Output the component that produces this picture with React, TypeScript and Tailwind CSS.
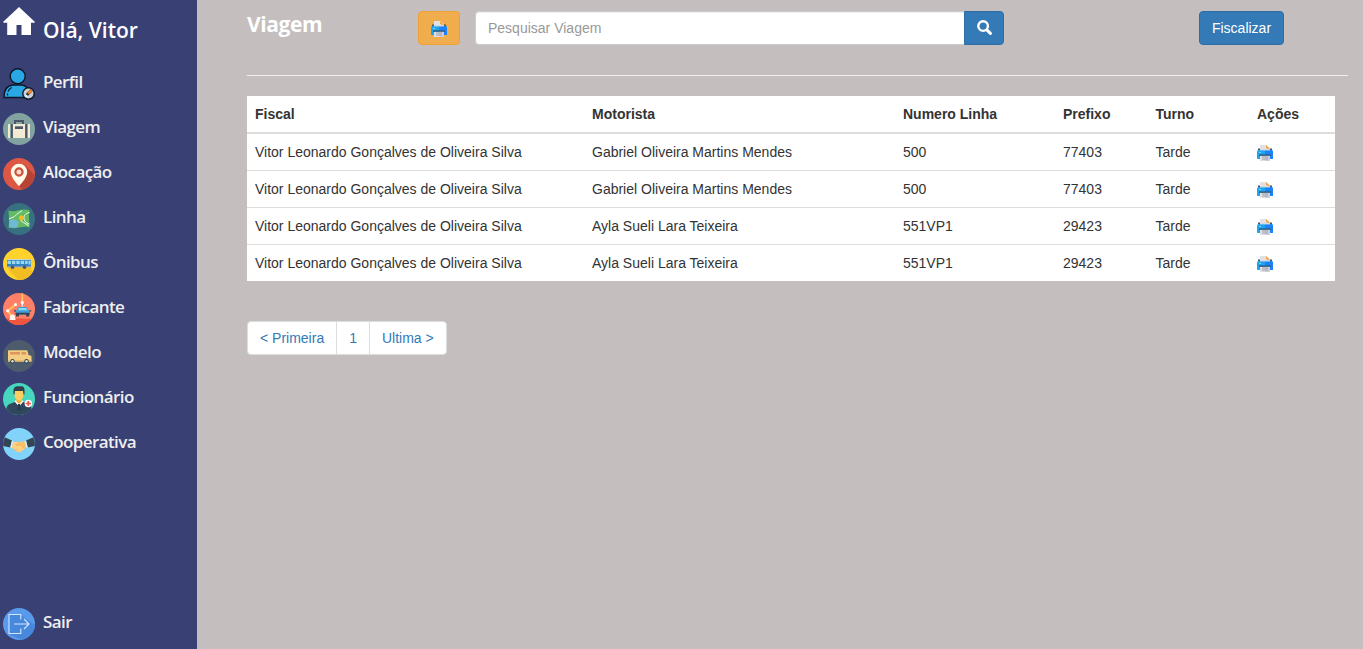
import type { ReactNode } from 'react';

function PrinterIcon() {
  return (
    <svg viewBox="0 0 16 16" className="block size-4">
      <path d="M1 3.500h2.500V7H1zM12.500 3.500H15V7h-2.500z" fill="#4a5565" />
      <path d="M3 0h6.500L13 3.500V7H3z" fill="#e0e1e5" />
      <path d="M9 0l4 4h-2.500L9 2.500z" fill="#f9a13c" />
      <path d="M1 5h14l1 1.500V13c0 .6-.4 1-1 1H1c-.6 0-1-.4-1-1V6.500z" fill="#1fa4f2" />
      <path d="M8 5h7l1 1.500V13c0 .6-.4 1-1 1H8z" fill="#1a83fb" />
      <path d="M3 4.800h10v.8H3z" fill="#9fc4e2" />
      <path d="M2 9.400h12v1.500H2z" fill="#2d5878" />
      <path d="M3 10.900h10V16H3z" fill="#dfdfe6" />
      <path d="M8 10.900h5V16H8z" fill="#cfcfd9" />
      <path d="M5 11.500h6v1H5zM5 13.600h6v.9H5z" fill="#a0a0a9" />
      <path d="M2 7h2v1H2z" fill="#7bd5ff" />
    </svg>
  );
}

function Icon({ children }: { children: ReactNode }) {
  return (
    <svg viewBox="0 0 32 32" className="block size-8 shrink-0">
      {children}
    </svg>
  );
}

const disc = (fill: string) => <circle cx="16" cy="16" r="16" fill={fill} />;

const homeIcon = (
  <Icon>
    <path d="M16 2L0 17l.8.8H4.200V30h9.300V20h5v10H28V17.800h3.200L32 17z" fill="#fff" />
  </Icon>
);

const items: { label: string; low?: boolean; icon: ReactNode }[] = [
  {
    label: 'Perfil',
    icon: (
      <Icon>
        <path d="M1 29.500C1 22 4.500 17.500 10 17h9c4 .8 6.500 3.200 7 7v5.500z" fill="#29a8e5" stroke="#0d1726" strokeWidth="1.400" />
        <circle cx="14.700" cy="8.300" r="7.500" fill="#29a8e5" stroke="#0d1726" strokeWidth="1.400" />
        <path d="M4.500 27.500v-2M5 23.500c.8-1.900 2-3.100 3.700-4" stroke="#0d1726" strokeWidth="1.200" fill="none" />
        <circle cx="25.500" cy="25.500" r="5.700" fill="#c9d0d5" stroke="#0d1726" strokeWidth="1.400" />
        <path d="M22.500 28.500l1-3.400 4.200-4 2 1.900-4.300 4.500z" fill="#333" />
        <path d="M24.300 24.500l3.500-3.300 1.700 1.700-3.500 3.300z" fill="#f58a20" />
        <path d="M21.800 29.200l1-3 2.200 2z" fill="#fff" />
      </Icon>
    ),
  },
  {
    label: 'Viagem',
    icon: (
      <Icon>
        {disc('#83a3a0')}
        <path d="M12 11V8h8v3" fill="none" stroke="#4d5468" strokeWidth="2" />
        <path d="M9.800 11h12.400v14H9.800z" fill="#f2ebd3" />
        <path d="M5 12c0-.6.4-1 1-1h1v14H6c-.6 0-1-.4-1-1zM25 11h1c.6 0 1 .4 1 1v12c0 .6-.4 1-1 1h-1z" fill="#f2ebd3" />
        <path d="M8 11h1.800v14H8zM22.200 11H24v14h-1.800z" fill="#4d5468" />
        <path d="M12 13.300h8v2.700h-8z" fill="#4d5468" />
      </Icon>
    ),
  },
  {
    label: 'Alocação',
    icon: (
      <Icon>
        {disc('#dc5744')}
        <path d="M22.500 8L32 17.200A16 16 0 0 1 19.500 31.600L16 28z" fill="#b74435" />
        <path d="M16 5.800a8.200 8.200 0 0 0-8.200 8.200C7.800 20 16 28.200 16 28.200S24.200 20 24.200 14A8.200 8.200 0 0 0 16 5.800z" fill="#fffbe7" />
        <circle cx="16" cy="14" r="3.600" fill="#f6dccb" stroke="#cf4f3f" strokeWidth="2.200" />
      </Icon>
    ),
  },
  {
    label: 'Linha',
    icon: (
      <Icon>
        {disc('#37707e')}
        <path d="M5.500 7.500c3 1 6 .8 10-.2s8-1 11 0l-.6 5 .6 12.200c-3-1-7-.9-10.500.1s-7.500.9-10.500-.1l.6-5z" fill="#62bb62" />
        <path d="M6.300 17.500c4-2 8.700-1.300 9.200 2 .2 2-1 3.500-1.500 5-3 .3-5.500.3-8-.5z" fill="#6fb9d5" />
        <path d="M6 15.800c7-2 6-4 13-8M17 17c2 2 4.500 3 8.800 5.700M26.500 9.500c-5 1-7 4.500-4.500 8.500 1 1.500 2.500 2.500 4.500 3" fill="none" stroke="#ecfaf1" strokeWidth="1" />
        <path d="M16 14.500c0-3 4.600-3 4.600 0 0 2-2.300 3.800-2.300 3.800S16 16.500 16 14.500z" fill="#f4bb28" />
      </Icon>
    ),
  },
  {
    label: 'Ônibus',
    icon: (
      <Icon>
        {disc('#ffd32c')}
        <path d="M4 19.500h24l1.200 5.500A16 16 0 0 1 15 32z" fill="#f2bd23" />
        <path d="M4 11.500h22.500c.8 0 1.400.5 1.400 1.300V19H4z" fill="#3385c4" />
        <path d="M4 11h22.500c.6 0 1 .3 1 .8H4z" fill="#d7e5ed" />
        <path d="M4.500 12.800h3.400v3.200H4.500zM8.900 12.800h3.400v3.200H8.900zM13.300 12.800h3.400v3.200h-3.400zM17.700 12.800h3.400v3.200h-3.400zM22.100 12.800h2.500v3.200h-2.500zM25.500 12.800h2v3.700h-2z" fill="#9bd9f2" />
        <path d="M4 18.400h24v1.100H4z" fill="#b9a7b8" />
        <circle cx="9.500" cy="19.200" r="1.700" fill="#495360" />
        <circle cx="21.500" cy="19.200" r="1.700" fill="#495360" />
      </Icon>
    ),
  },
  {
    label: 'Fabricante',
    icon: (
      <Icon>
        {disc('#ff8066')}
        <path d="M3 25.500h26a16 16 0 0 1-26 0z" fill="#f05540" />
        <path d="M19.300.4V9M9 24L4.800 17.800l7.700-6" fill="none" stroke="#ffc65b" strokeWidth="1.800" />
        <path d="M19.300 9v4.500" stroke="#e9eef2" strokeWidth="1.300" />
        <circle cx="9.500" cy="24" r="2.600" fill="#fff4ee" />
        <path d="M6.500 25.500h6V27h-6z" fill="#fff4ee" />
        <circle cx="4.800" cy="17.800" r="1.600" fill="#fff" />
        <circle cx="12.500" cy="11.500" r="1.500" fill="#fff" />
        <circle cx="19.300" cy="9.500" r="1.600" fill="#fff" />
        <path d="M13 18l2-3.200c.4-.6.9-.8 1.600-.8h6c.7 0 1.200.2 1.600.8l2 3.200.6 3.500H12.400z" fill="#3d9fdb" />
        <path d="M14.600 17.300l1.500-2.300h7l1.500 2.300z" fill="#8bdbf4" />
        <path d="M11 17.300h2v1.200h-2zM26.200 17.300h2v1.200h-2zM12.500 19.800h14.200v1.800H12.500zM13 21.500h3V23.500h-3zM23.200 21.500h3V23.500h-3z" fill="#344154" />
      </Icon>
    ),
  },
  {
    label: 'Modelo',
    low: true,
    icon: (
      <Icon>
        {disc('#4c5c6d')}
        <path d="M5 11.200c0-.6.400-1 1-1h17.500c.6 0 1 .3 1.100.8l.9 4 2 .6c.6.200 1 .7 1 1.300V21.500H5z" fill="#f2cd82" />
        <path d="M7 12h10v2.600H7zM18.500 12h4.300l.8 2.600h-5.100z" fill="#dd955d" />
        <path d="M5 20.300h23.500v1.300H5z" fill="#e5b968" />
        <circle cx="9.500" cy="21.300" r="2.200" fill="#344150" />
        <circle cx="9.500" cy="21.300" r="1.200" fill="#e4e7e9" />
        <circle cx="23.500" cy="21.300" r="2.200" fill="#344150" />
        <circle cx="23.500" cy="21.300" r="1.200" fill="#e4e7e9" />
      </Icon>
    ),
  },
  {
    label: 'Funcionário',
    icon: (
      <Icon>
        {disc('#47d6be')}
        <path d="M3.500 26c0-3 1.500-4.500 4.500-5.500l5-2h6l5 2c3 1 4.500 2.500 4.500 5.500A16 16 0 0 1 3.500 26z" fill="#30475b" />
        <path d="M11.500 18.500l4.500 5 4.500-5L19 17h-6z" fill="#fff" />
        <path d="M13.300 14h5.400v4.500L16 21l-2.700-2.500z" fill="#e8ad3e" />
        <path d="M11.500 9c0-3 2-4 4.500-4s4.500 1 4.500 4v3c0 3-2.200 5.500-4.500 5.500s-4.500-2.500-4.500-5.500z" fill="#ffce63" />
        <path d="M10.500 11.500V7c0-2.300 2-3.700 4-3.700h4c2 0 3 1.700 3 3.700v4.500h-1l-.5-3.500h-8l-.5 3.500z" fill="#30404d" />
        <path d="M15 21h2l.8 6h-3.600z" fill="#263b4b" />
        <circle cx="25.300" cy="20.500" r="3.700" fill="#fff" />
        <path d="M24.500 17.900h1.600v1.800h1.800v1.600h-1.800v1.800h-1.600v-1.800h-1.800v-1.600h1.800z" fill="#ee5148" />
      </Icon>
    ),
  },
  {
    label: 'Cooperativa',
    icon: (
      <Icon>
        {disc('#81d3fa')}
        <path d="M1.700 9.200l7.300 3.300-1.800 7L.2 18A16 16 0 0 1 1.700 9.200zM30.300 9.200L23 12.500l1.800 7 7-1.500a16 16 0 0 0-1.500-8.800z" fill="#344654" />
        <path d="M9 12.500l1.500.7-1.600 6.800-1.700-.5zM23 12.500l-1.500.7 1.600 6.800 1.700-.5z" fill="#d9edf3" />
        <path d="M10.500 14.200l5.500-.4 5.500-.4 1.700 5.800-5 4c-2 1.500-4.500.7-6-.7L8.900 19.500z" fill="#f8c26b" />
        <path d="M10.500 14.200l4.500-.2-2.500 2.500 1.500 1.300 3-1.300 5 4-2.500 2-3 1.500-3.500-1-4-3.500z" fill="#ffd080" />
        <path d="M12.500 16.500l1.500 1.300 3-1.300 4.500 4M11.500 21l1.500 1.800M13.500 20.500l1.800 2.300" stroke="#e3a356" strokeWidth=".6" fill="none" />
      </Icon>
    ),
  },
];

const exitIcon = (
  <Icon>
    {disc('#5a9aec')}
    <path d="M18 7l14 10A16 16 0 0 1 18.500 31.800L6 26V7z" fill="#4787dc" />
    <path d="M17.800 11.500V6.500H6v19h11.800v-5M11 16h14M21 11l5 5-5 5" fill="none" stroke="#d5e8ff" strokeWidth="1.100" />
  </Icon>
);

function NavItem({ label, icon, low }: { label: string; icon: ReactNode; low?: boolean }) {
  return (
    <a className="flex h-[45px] gap-2 pl-[3px] text-[17px] font-semibold leading-[40px] tracking-[-0.6px] text-[#eeeeee]">
      <span className={low ? 'pt-2' : 'pt-1.5'}>{icon}</span>
      <span>{label}</span>
    </a>
  );
}

const trips = [
  ['Vitor Leonardo Gonçalves de Oliveira Silva', 'Gabriel Oliveira Martins Mendes', '500', '77403', 'Tarde'],
  ['Vitor Leonardo Gonçalves de Oliveira Silva', 'Gabriel Oliveira Martins Mendes', '500', '77403', 'Tarde'],
  ['Vitor Leonardo Gonçalves de Oliveira Silva', 'Ayla Sueli Lara Teixeira', '551VP1', '29423', 'Tarde'],
  ['Vitor Leonardo Gonçalves de Oliveira Silva', 'Ayla Sueli Lara Teixeira', '551VP1', '29423', 'Tarde'],
];

const headings = ['Fiscal', 'Motorista', 'Numero Linha', 'Prefixo', 'Turno', 'Ações'];

export default function App() {
  return (
    <div className="flex h-[649px] w-[1363px] overflow-hidden bg-[#c4bebe] font-['Liberation_Sans',Arial,sans-serif] text-sm leading-5 text-[#333333]">
      <aside className="flex w-[197px] shrink-0 flex-col bg-[#384074] font-['Open_Sans','Noto_Sans',sans-serif]">
        <div className="flex h-[62px] gap-2 pl-[3px] pt-[5px] text-[21px] font-semibold leading-[50px] text-white">
          {homeIcon}
          <span>Olá, Vitor</span>
        </div>
        <nav>
          {items.map((item) => (
            <NavItem key={item.label} {...item} />
          ))}
        </nav>
        <div className="mt-auto pb-[2px]">
          <NavItem label="Sair" icon={exitIcon} />
        </div>
      </aside>

      <main className="flex flex-1 flex-col pl-[50px] pr-[15px]">
        <header className="flex h-[76px] shrink-0 items-start border-b border-[#eeeeee] pt-[11px]">
          <h1 className="w-[171px] font-['Open_Sans','Noto_Sans',sans-serif] text-[21px] font-bold leading-[26px] tracking-[-0.4px] text-white">Viagem</h1>
          <button className="flex h-[34px] w-[42px] items-center justify-center rounded border border-[#eea236] bg-[#f0ad4e] pt-[2px]">
            <PrinterIcon />
          </button>
          <div className="ml-[15px] flex">
            <input
              className="h-[34px] w-[490px] rounded-l border border-[#cccccc] bg-white px-3 shadow-[inset_0_1px_1px_rgba(0,0,0,0.075)] outline-none placeholder:text-[#999999]"
              placeholder="Pesquisar Viagem"
            />
            <button className="-ml-px flex h-[34px] w-10 items-center justify-center rounded-r border border-[#2e6da4] bg-[#337ab7]">
              <svg viewBox="0 0 14 14" className="mb-0.5 size-[15px]" fill="none" stroke="white">
                <circle cx="5.700" cy="5.700" r="4.500" strokeWidth="2.200" />
                <path d="M9.200 9.200l3.300 3.300" strokeWidth="2.800" strokeLinecap="round" />
              </svg>
            </button>
          </div>
          <button className="ml-[195px] h-[34px] w-[85px] rounded border border-[#2e6da4] bg-[#337ab7] text-white">Fiscalizar</button>
        </header>

        <table className="mt-5 w-[1088px] table-fixed border-separate border-spacing-0 bg-white text-left">
          <colgroup>
            <col className="w-[337px]" />
            <col className="w-[311px]" />
            <col className="w-[160px]" />
            <col className="w-[92.5px]" />
            <col className="w-[101.5px]" />
            <col className="w-[86px]" />
          </colgroup>
          <thead>
            <tr>
              {headings.map((heading) => (
                <th key={heading} className="border-b-2 border-[#dddddd] p-2 font-bold">{heading}</th>
              ))}
            </tr>
          </thead>
          <tbody className="[&>tr:last-child>td]:border-b-0">
            {trips.map((trip, row) => (
              <tr key={row}>
                {trip.map((value, column) => (
                  <td key={column} className="border-b border-[#dddddd] p-2">{value}</td>
                ))}
                <td className="border-b border-[#dddddd] px-2 pb-0 pt-0.5">
                  <PrinterIcon />
                </td>
              </tr>
            ))}
          </tbody>
        </table>

        <div className="mt-10 flex text-[#337ab7]">
          <a className="rounded-l border border-[#dddddd] bg-white px-3 py-1.5">&lt; Primeira</a>
          <a className="-ml-px border border-[#dddddd] bg-white px-3 py-1.5">1</a>
          <a className="-ml-px rounded-r border border-[#dddddd] bg-white px-3 py-1.5">Ultima &gt;</a>
        </div>
      </main>
    </div>
  );
}
